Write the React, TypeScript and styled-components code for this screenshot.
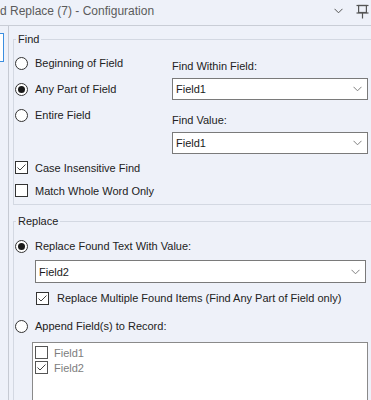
import React from "react";
import styled, { createGlobalStyle } from "styled-components";

const GlobalStyle = createGlobalStyle`
  html, body { margin: 0; padding: 0; background: #eef1f9; }
  body {
    font-family: "Liberation Sans", Arial, sans-serif;
    font-size: 11px;
    color: #222;
    overflow: hidden;
  }
  * { box-sizing: border-box; }
`;

const Window = styled.div`
  width: 371px;
  height: 400px;
  overflow: hidden;
  display: flex;
  flex-direction: column;
  background: #eef1f9;
`;

const Header = styled.div`
  height: 26px;
  flex: none;
  display: flex;
  align-items: center;
  border-bottom: 1px solid #c9cdd6;
  padding: 0 2px 3px 0;
  overflow: hidden;
`;

const Title = styled.div`
  flex: 1;
  font-size: 12px;
  color: #5b5b5b;
  white-space: nowrap;
`;

const HeaderIcons = styled.div`
  display: flex;
  align-items: center;
  gap: 13px;
`;

const Body = styled.div`
  flex: 1;
  display: flex;
  min-height: 0;
`;

const LeftStrip = styled.div`
  width: 8px;
  flex: none;
`;

const FocusBox = styled.div`
  width: 4px;
  height: 29px;
  margin-top: 7px;
  background: #fff;
  border: 1px solid #3b8ee0;
  border-left: none;
`;

const Panel = styled.div`
  flex: 1;
  border-left: 1px solid #c6cad3;
  padding-left: 4px;
  display: flex;
  flex-direction: column;
  min-width: 0;
`;

const Group = styled.fieldset<{ $top: number }>`
  margin: ${(p) => p.$top}px 0 0 0;
  padding: 0 0 2px 1px;
  border: 1px solid #d3d8e2;
  border-right: none;
  min-width: 0;
`;

const GroupTitle = styled.legend`
  padding: 0 2px;
  margin-left: 1px;
  font-size: 11px;
  line-height: 13px;
  color: #222;
`;

const FindTop = styled.div`
  display: flex;
  padding-top: 4px;
`;

const RadioColumn = styled.div`
  width: 157px;
  flex: none;
  display: flex;
  flex-direction: column;
`;

const FieldColumn = styled.div`
  flex: 1;
  display: flex;
  flex-direction: column;
  margin-right: 3px;
  padding-top: 10px;
`;

const FieldLabel = styled.div<{ $mt: number }>`
  line-height: 13px;
  margin-top: ${(p) => p.$mt}px;
  margin-bottom: 5px;
  color: #222;
`;

const Row = styled.label<{ $h: number; $ml?: number; $mt?: number; $gap?: number }>`
  height: ${(p) => p.$h}px;
  display: flex;
  align-items: center;
  gap: ${(p) => p.$gap ?? 7}px;
  margin-left: ${(p) => p.$ml ?? 0}px;
  margin-top: ${(p) => p.$mt ?? 0}px;
  white-space: nowrap;
  color: #222;
`;

const RadioCircle = styled.span<{ $checked?: boolean }>`
  width: 13px;
  height: 13px;
  flex: none;
  border-radius: 50%;
  border: 1px solid #333;
  background: #fff;
  display: flex;
  align-items: center;
  justify-content: center;
  &::after {
    content: "";
    width: 7px;
    height: 7px;
    border-radius: 50%;
    background: ${(p) => (p.$checked ? "#1a1a1a" : "transparent")};
  }
`;

const Box = styled.span<{ $light?: boolean }>`
  width: 13px;
  height: 13px;
  flex: none;
  border: 1px solid ${(p) => (p.$light ? "#555" : "#333")};
  background: #fff;
  display: flex;
  align-items: center;
  justify-content: center;
`;

const Select = styled.div<{ $h: number; $ml?: number; $mr?: number; $mt?: number }>`
  height: ${(p) => p.$h}px;
  margin-left: ${(p) => p.$ml ?? 0}px;
  margin-right: ${(p) => p.$mr ?? 0}px;
  margin-top: ${(p) => p.$mt ?? 0}px;
  border: 1px solid #7a7a7a;
  background: #fff;
  display: flex;
  align-items: center;
  justify-content: space-between;
  padding: 0 5px 0 3px;
  color: #1a1a1a;
`;

const ListBox = styled.div`
  margin: 3px 3px 0 17px;
  height: 80px;
  border: 1px solid #8a8a8a;
  background: #fff;
  padding: 2px 0 0 2px;
  display: flex;
  flex-direction: column;
`;

const ListItem = styled.div`
  height: 15px;
  display: flex;
  align-items: center;
  gap: 6px;
  color: #7d7d7d;
`;

const Check = () => (
  <svg width="11" height="11" viewBox="0 0 11 11">
    <polyline points="1.5,5.5 4,8 9.5,2.5" fill="none" stroke="#444" strokeWidth="1" />
  </svg>
);

const Chevron = ({ color = "#808080" }: { color?: string }) => (
  <svg width="9" height="6" viewBox="0 0 9 6">
    <polyline points="0.5,0.8 4.5,4.8 8.5,0.8" fill="none" stroke={color} strokeWidth="1" />
  </svg>
);

const Pin = () => (
  <svg width="13" height="15" viewBox="0 0 13 15">
    <g fill="none" stroke="#555" strokeWidth="1.2">
      <line x1="0.5" y1="1.5" x2="12.5" y2="1.5" />
      <rect x="2.6" y="1.5" width="7.8" height="7" />
      <line x1="0.5" y1="9" x2="12.5" y2="9" />
      <line x1="6.5" y1="9" x2="6.5" y2="14.5" />
    </g>
  </svg>
);

const Dropdown = (props: { value: string; h: number; ml?: number; mr?: number; mt?: number }) => (
  <Select $h={props.h} $ml={props.ml} $mr={props.mr} $mt={props.mt}>
    <span>{props.value}</span>
    <Chevron />
  </Select>
);

export default function App() {
  return (
    <>
      <GlobalStyle />
      <Window>
        <Header>
          <Title>d Replace (7) - Configuration</Title>
          <HeaderIcons>
            <Chevron color="#555" />
            <Pin />
          </HeaderIcons>
        </Header>
        <Body>
          <LeftStrip>
            <FocusBox />
          </LeftStrip>
          <Panel>
            <Group $top={7}>
              <GroupTitle>Find</GroupTitle>
              <FindTop>
                <RadioColumn>
                  <Row $h={26}>
                    <RadioCircle />
                    Beginning of Field
                  </Row>
                  <Row $h={26}>
                    <RadioCircle $checked />
                    Any Part of Field
                  </Row>
                  <Row $h={26}>
                    <RadioCircle />
                    Entire Field
                  </Row>
                </RadioColumn>
                <FieldColumn>
                  <FieldLabel $mt={0}>Find Within Field:</FieldLabel>
                  <Dropdown value="Field1" h={22} />
                  <FieldLabel $mt={14}>Find Value:</FieldLabel>
                  <Dropdown value="Field1" h={22} />
                </FieldColumn>
              </FindTop>
              <Row $h={23} $mt={2}>
                <Box>
                  <Check />
                </Box>
                Case Insensitive Find
              </Row>
              <Row $h={23}>
                <Box />
                Match Whole Word Only
              </Row>
            </Group>
            <Group $top={10}>
              <GroupTitle>Replace</GroupTitle>
              <Row $h={26} $mt={5}>
                <RadioCircle $checked />
                Replace Found Text With Value:
              </Row>
              <Dropdown value="Field2" h={23} ml={20} mr={5} mt={1} />
              <Row $h={20} $ml={21} $mt={5} $gap={8}>
                <Box>
                  <Check />
                </Box>
                Replace Multiple Found Items (Find Any Part of Field only)
              </Row>
              <Row $h={26} $mt={5}>
                <RadioCircle />
                Append Field(s) to Record:
              </Row>
              <ListBox>
                <ListItem>
                  <Box $light />
                  Field1
                </ListItem>
                <ListItem>
                  <Box $light>
                    <Check />
                  </Box>
                  Field2
                </ListItem>
              </ListBox>
            </Group>
          </Panel>
        </Body>
      </Window>
    </>
  );
}
